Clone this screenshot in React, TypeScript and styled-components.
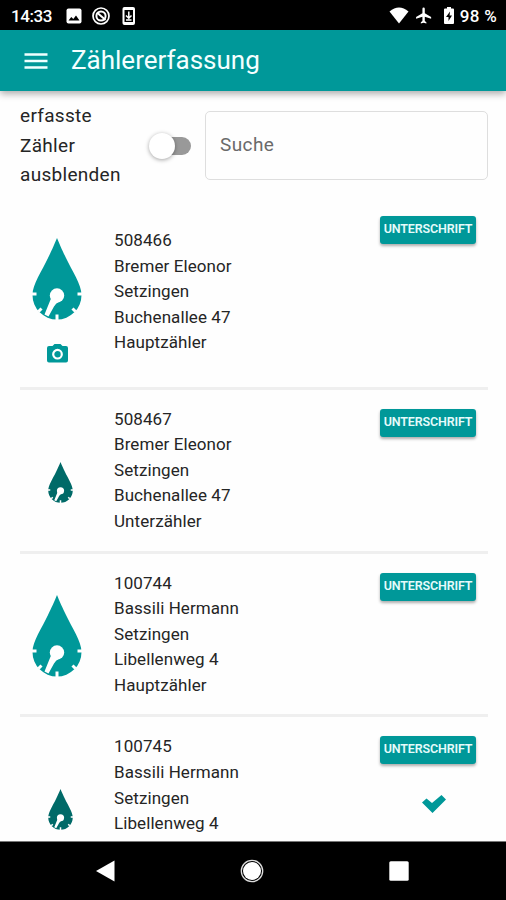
import React from "react";
import styled, { createGlobalStyle } from "styled-components";

const TEAL = "#009899";
const DARK_TEAL = "#006a68";

const GlobalStyle = createGlobalStyle`
  * { box-sizing: border-box; }
  body { margin: 0; background: #fff; font-family: Roboto, "Liberation Sans", sans-serif; color: #252525; }
`;

const Screen = styled.div`
  width: 506px;
  height: 900px;
  display: flex;
  flex-direction: column;
  overflow: hidden;
  background: #fefefe;
`;

const StatusBar = styled.div`
  flex: none;
  height: 30px;
  padding: 1px 9px 0 11px;
  display: flex;
  align-items: center;
  background: #000;
  color: #fff;
  font-size: 17px;
  font-weight: 500;
`;

const Clock = styled.span`
  width: 54.5px;
  letter-spacing: -0.4px;
  white-space: nowrap;
`;

const StatusIcons = styled.div`
  display: flex;
  align-items: center;
  gap: 10px;
  flex: 1;
`;

const StatusRight = styled.div`
  display: flex;
  align-items: center;
  gap: 5px;
  white-space: nowrap;
`;

const Percent = styled.span`
  margin-left: -2px;
  letter-spacing: 0.3px;
`;

const Icon = styled.svg`
  display: block;
  flex: none;
`;

const AppBar = styled.header`
  flex: none;
  height: 61px;
  display: flex;
  align-items: center;
  gap: 23px;
  padding-left: 24px;
  background: ${TEAL};
  box-shadow: 0 3px 7px rgba(0, 0, 0, 0.32);
  z-index: 1;
`;

const Title = styled.h1`
  margin: 0;
  padding-bottom: 2px;
  font-size: 26px;
  font-weight: 400;
  color: #f4ffff;
  white-space: nowrap;
`;

const Content = styled.main`
  flex: 1;
  min-height: 0;
  overflow: hidden;
  padding: 0 18px 0 20px;
`;

const Filters = styled.div`
  height: 106px;
  padding-top: 9px;
  display: flex;
  align-items: flex-start;
`;

const FilterLabel = styled.label`
  width: 129px;
  padding-top: 1px;
  font-size: 19px;
  line-height: 29.5px;
  letter-spacing: 0.3px;
`;

const Switch = styled.div`
  width: 42px;
  height: 27px;
  margin: 32px 14px 0 0;
  display: flex;
  align-items: center;
`;

const Thumb = styled.span`
  flex: none;
  width: 26px;
  height: 26px;
  border-radius: 50%;
  background: #fff;
  box-shadow: 0 1px 4px rgba(0, 0, 0, 0.36);
  z-index: 1;
`;

const Track = styled.span`
  flex: none;
  width: 30px;
  height: 18px;
  margin-left: -14px;
  border-radius: 0 9px 9px 0;
  background: #999;
`;

const Search = styled.div`
  flex: 1;
  height: 69px;
  margin-top: 11px;
  padding: 0 14px 2px;
  display: flex;
  align-items: center;
  border: 1.5px solid #dedede;
  border-radius: 5px;
  color: #6a6a6a;
  font-size: 19px;
  letter-spacing: 0.4px;
`;

const Row = styled.section<{ $height: number }>`
  height: ${(p) => p.$height}px;
  display: grid;
  grid-template-columns: 94px 1fr 96px 12px;
  border-bottom: 3px solid #efefef;
`;

const MeterCell = styled.div<{ $offset: number; $small?: boolean }>`
  display: flex;
  flex-direction: column;
  align-items: flex-start;
  gap: 24px;
  padding: ${(p) => p.$offset}px 0 0 ${(p) => (p.$small ? 28 : 12)}px;
`;

const CameraSlot = styled.div`
  padding-left: 15px;
`;

const Lines = styled.div<{ $offset: number }>`
  padding-top: ${(p) => p.$offset}px;
  font-size: 17px;
  line-height: 25.6px;
  letter-spacing: 0.08px;
  white-space: nowrap;
`;

const Actions = styled.div`
  display: flex;
  flex-direction: column;
  align-items: center;
  gap: 31px;
  padding-top: 19px;
`;

const SignButton = styled.button`
  width: 96px;
  height: 28px;
  padding: 0;
  border: 0;
  border-radius: 3px;
  background: ${TEAL};
  color: #e6fbfb;
  font: 600 12.5px/26px Roboto, "Liberation Sans", sans-serif;
  letter-spacing: -0.15px;
  padding-bottom: 2px;
  box-shadow: 0 2px 3px rgba(0, 0, 0, 0.32);
  white-space: nowrap;
`;

const CheckSlot = styled.div`
  padding-left: 12px;
`;

const NavBar = styled.nav`
  flex: none;
  height: 59px;
  padding: 0 97px 0 96px;
  border-top: 1px solid #777;
  display: flex;
  align-items: center;
  justify-content: space-between;
  background: #000;
`;

function Drop({ small }: { small?: boolean }) {
  return (
    <Icon width={small ? 25 : 50} height={small ? 41 : 82} viewBox="0 0 50 82">
      <path
        d="M25 0C27 5 31 14 34 20C40 33 49.5 46 49.5 57A24.5 24.5 0 0 1 .5 57C.5 46 10 33 16 20C19 14 23 5 25 0Z"
        fill={small ? DARK_TEAL : TEAL}
      />
      <g stroke="#fff" strokeWidth="3" fill="none">
        <path d="M0 56H4.5M45.5 56H50M25 76.5V82M6.5 73.5L9.5 70.5M43.5 73.5L40.5 70.5" />
      </g>
      <circle cx="25" cy="57.5" r="7.2" fill="#fff" />
      <path d="M19 60.5L12.5 76.5L16.5 78.5L22 68.5Q24 65 26.500 64Z" fill="#fff" />
    </Icon>
  );
}

function Camera() {
  return (
    <Icon width="21" height="19" viewBox="0 0 21 19">
      <path d="M2 2H5.5L7.5 0H13.5L15.5 2H19Q21 2 21 4V16.5Q21 18.5 19 18.5H2Q0 18.5 0 16.5V4Q0 2 2 2Z" fill={TEAL} />
      <circle cx="10.5" cy="10.2" r="4.3" fill="none" stroke="#fff" strokeWidth="2.2" />
    </Icon>
  );
}

const meters = [
  { id: "508466", name: "Bremer Eleonor", street: "Buchenallee 47", kind: "Hauptzähler", height: 193, textTop: 31, dropTop: 40.5, camera: true },
  { id: "508467", name: "Bremer Eleonor", street: "Buchenallee 47", kind: "Unterzähler", height: 163.7, textTop: 16.7, dropTop: 71.5, small: true },
  { id: "100744", name: "Bassili Hermann", street: "Libellenweg 4", kind: "Hauptzähler", height: 163.7, textTop: 17, dropTop: 41 },
  { id: "100745", name: "Bassili Hermann", street: "Libellenweg 4", height: 163.7, textTop: 17, dropTop: 71.5, small: true, done: true },
];

export default function App() {
  return (
    <Screen>
      <GlobalStyle />
      <StatusBar>
        <Clock>14:33</Clock>
        <StatusIcons>
          <Icon width="16" height="16" viewBox="0 0 16 16">
            <rect x=".5" y=".5" width="15" height="15" rx="2" fill="#fff" />
            <path d="M2.5 12.5L5.3 9L7.3 11L10 7.5L13.5 12.5Z" fill="#000" />
          </Icon>
          <Icon width="18" height="18" viewBox="0 0 18 18" fill="none" stroke="#fff">
            <circle cx="9" cy="9" r="8" strokeWidth="1.7" />
            <circle cx="9" cy="9" r="4.6" strokeWidth="2" />
            <path d="M5 5.500L13.500 13" strokeWidth="2" />
          </Icon>
          <Icon width="18" height="18" viewBox="0 0 18 18">
            <rect x="2.5" y="0" width="12.5" height="18" rx="2" fill="#fff" />
            <path d="M4.5 3H13V15H4.5Z" fill="#000" />
            <path d="M8.8 4.5V11M6 8.5L8.8 11.3L11.5 8.5M6 13H11.5" stroke="#fff" strokeWidth="1.5" fill="none" />
          </Icon>
        </StatusIcons>
        <StatusRight>
          <Icon width="20" height="17" viewBox="0 0 20 17">
            <path d="M.5 4.5Q10-3.500 19.500 4.500L10 16.5Z" fill="#fff" />
          </Icon>
          <Icon width="20" height="19" viewBox="0 0 24 24">
            <path d="M21 16v-2l-8-5V3.500a1.500 1.500 0 0 0-3 0V9l-8 5v2l8-2.500V19l-2 1.500V22l3.500-1 3.500 1v-1.500L13 19v-5.500Z" fill="#fff" />
          </Icon>
          <Icon width="18" height="17" viewBox="0 0 18 17">
            <path d="M6 1.5H8V0H12V1.5H14Q15 1.5 15 2.5V16Q15 17 14 17H6Q5 17 5 16V2.5Q5 1.5 6 1.5Z" fill="#fff" />
            <path d="M11 4.5L7 10H9.5V14L13 8.5H10.6Z" fill="#000" />
          </Icon>
          <Percent>98 %</Percent>
        </StatusRight>
      </StatusBar>
      <AppBar>
        <Icon width="24" height="16" viewBox="0 0 24 16">
          <path d="M.5 1.5H23.500M.5 8H23.500M.5 14.500H23.500" stroke="#efffff" strokeWidth="2.600" />
        </Icon>
        <Title>Zählererfassung</Title>
      </AppBar>
      <Content>
        <Filters>
          <FilterLabel>erfasste<br />Zähler<br />ausblenden</FilterLabel>
          <Switch><Thumb /><Track /></Switch>
          <Search>Suche</Search>
        </Filters>
        {meters.map((m) => (
          <Row key={m.id} $height={m.height}>
            <MeterCell $offset={m.dropTop} $small={m.small}>
              <Drop small={m.small} />
              {m.camera && <CameraSlot><Camera /></CameraSlot>}
            </MeterCell>
            <Lines $offset={m.textTop}>
              <div>{m.id}</div>
              <div>{m.name}</div>
              <div>Setzingen</div>
              <div>{m.street}</div>
              {m.kind && <div>{m.kind}</div>}
            </Lines>
            <Actions>
              <SignButton>UNTERSCHRIFT</SignButton>
              {m.done && (
                <CheckSlot>
                  <Icon width="24" height="18" viewBox="0 0 24 18">
                    <path d="M0 7.500L4.500 3.500L10 8L19.500 0L24 4.500L10.500 18Z" fill={TEAL} />
                  </Icon>
                </CheckSlot>
              )}
            </Actions>
          </Row>
        ))}
      </Content>
      <NavBar>
        <Icon width="19" height="22" viewBox="0 0 19 22"><path d="M0 11L18.500 .5V21.500Z" fill="#fff" /></Icon>
        <Icon width="24" height="24" viewBox="0 0 24 24">
          <circle cx="12" cy="12" r="10.700" fill="none" stroke="#ddd" strokeWidth="1.300" />
          <circle cx="12" cy="12" r="9" fill="#fff" />
        </Icon>
        <Icon width="20" height="20" viewBox="0 0 20 20"><rect x=".3" y=".3" width="19.400" height="19.400" rx="1.500" fill="#fff" /></Icon>
      </NavBar>
    </Screen>
  );
}
